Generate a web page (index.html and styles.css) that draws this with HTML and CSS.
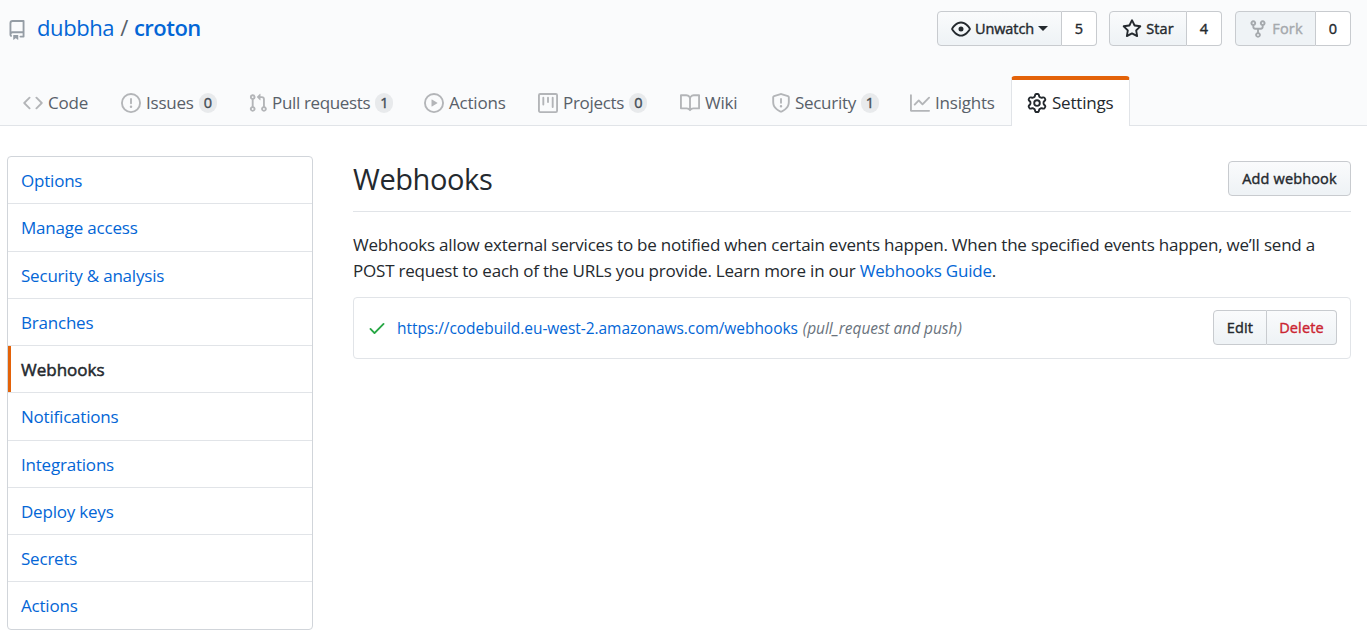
FILE: index.html
```html
<!DOCTYPE html>
<html lang="en">
<head>
<meta charset="utf-8">
<title>Webhooks</title>
<link rel="stylesheet" href="styles.css">
</head>
<body>
<header class="pagehead">
  <div class="repo-row">
    <h1 class="repo-title">
      <svg class="icon repo-icon" viewBox="0 0 16 16"><path fill-rule="evenodd" d="M2 2.5A2.5 2.5 0 014.5 0h8.75a.75.75 0 01.75.75v12.5a.75.75 0 01-.75.75h-2.5a.75.75 0 110-1.5h1.75v-2h-8a1 1 0 00-.714 1.7.75.75 0 01-1.072 1.05A2.495 2.495 0 012 11.5v-9zm10.5-1V9h-8c-.356 0-.694.074-1 .208V2.5a1 1 0 011-1h8zM5 12.25v3.25a.25.25 0 00.4.2l1.45-1.087a.25.25 0 01.3 0L8.6 15.7a.25.25 0 00.4-.2v-3.25a.25.25 0 00-.25-.25h-3.5a.25.25 0 00-.25.25z"/></svg>
      <a class="owner" href="#">dubbha</a><span class="slash">/</span><a class="repo" href="#">croton</a>
    </h1>
    <div class="actions">
      <div class="group watch">
        <button class="btn"><svg class="icon" viewBox="0 0 16 16"><path fill-rule="evenodd" d="M1.679 7.932c.412-.621 1.242-1.75 2.366-2.717C5.175 4.242 6.527 3.5 8 3.5c1.473 0 2.824.742 3.955 1.715 1.124.967 1.954 2.096 2.366 2.717a.119.119 0 010 .136c-.412.621-1.242 1.75-2.366 2.717C10.825 11.758 9.473 12.5 8 12.5c-1.473 0-2.824-.742-3.955-1.715C2.92 9.818 2.09 8.69 1.679 8.068a.119.119 0 010-.136zM8 2c-1.981 0-3.67.992-4.933 2.078C1.797 5.169.88 6.423.43 7.1a1.619 1.619 0 000 1.798c.45.678 1.367 1.932 2.637 3.024C4.329 13.008 6.019 14 8 14c1.981 0 3.67-.992 4.933-2.078 1.27-1.091 2.187-2.345 2.637-3.023a1.619 1.619 0 000-1.798c-.45-.678-1.367-1.932-2.637-3.023C11.671 2.992 9.981 2 8 2zm0 8a2 2 0 100-4 2 2 0 000 4z"/></svg><span>Unwatch</span><i class="caret"></i></button><a class="count" href="#">5</a>
      </div>
      <div class="group star">
        <button class="btn"><svg class="icon" viewBox="0 0 16 16"><path fill-rule="evenodd" d="M8 .25a.75.75 0 01.673.418l1.882 3.815 4.21.612a.75.75 0 01.416 1.279l-3.046 2.97.719 4.192a.75.75 0 01-1.088.791L8 12.347l-3.766 1.98a.75.75 0 01-1.088-.79l.72-4.194L.818 6.374a.75.75 0 01.416-1.28l4.21-.611L7.327.668A.75.75 0 018 .25zm0 2.445L6.615 5.5a.75.75 0 01-.564.41l-3.097.45 2.24 2.184a.75.75 0 01.216.664l-.528 3.084 2.769-1.456a.75.75 0 01.698 0l2.77 1.456-.53-3.084a.75.75 0 01.216-.664l2.24-2.183-3.096-.45a.75.75 0 01-.564-.41L8 2.694z"/></svg><span>Star</span></button><a class="count" href="#">4</a>
      </div>
      <div class="group fork">
        <button class="btn disabled"><svg class="icon" viewBox="0 0 16 16"><path fill-rule="evenodd" d="M5 3.25a.75.75 0 11-1.5 0 .75.75 0 011.5 0zm0 2.122a2.25 2.25 0 10-1.5 0v.878A2.25 2.25 0 005.75 8.5h1.5v2.128a2.251 2.251 0 101.5 0V8.5h1.5a2.25 2.25 0 002.25-2.25v-.878a2.25 2.25 0 10-1.5 0v.878a.75.75 0 01-.75.75h-4.5A.75.75 0 015 6.25v-.878zm3.75 7.378a.75.75 0 11-1.5 0 .75.75 0 011.5 0zm3-8.75a.75.75 0 100-1.5.75.75 0 000 1.5z"/></svg><span>Fork</span></button><a class="count" href="#">0</a>
      </div>
    </div>
  </div>
  <nav class="tabs">
    <a class="tab code" href="#"><svg class="icon" viewBox="0 0 16 16"><path fill-rule="evenodd" d="M4.72 3.22a.75.75 0 011.06 1.06L2.06 8l3.72 3.72a.75.75 0 11-1.06 1.06L.47 8.53a.75.75 0 010-1.06l4.25-4.25zm6.56 0a.75.75 0 10-1.06 1.06L13.94 8l-3.72 3.72a.75.75 0 101.06 1.06l4.25-4.25a.75.75 0 000-1.06l-4.25-4.25z"/></svg><span>Code</span></a>
    <a class="tab issues" href="#"><svg class="icon" viewBox="0 0 16 16"><path fill-rule="evenodd" d="M8 1.5a6.5 6.5 0 100 13 6.5 6.5 0 000-13zM0 8a8 8 0 1116 0A8 8 0 010 8zm9 3a1 1 0 11-2 0 1 1 0 012 0zm-.25-6.25a.75.75 0 00-1.5 0v3.5a.75.75 0 001.5 0v-3.5z"/></svg><span>Issues</span><b class="counter">0</b></a>
    <a class="tab pulls" href="#"><svg class="icon" viewBox="0 0 16 16"><path fill-rule="evenodd" d="M7.177 3.073L9.573.677A.25.25 0 0110 .854v4.792a.25.25 0 01-.427.177L7.177 3.427a.25.25 0 010-.354zM3.75 2.5a.75.75 0 100 1.5.75.75 0 000-1.5zm-2.25.75a2.25 2.25 0 113 2.122v5.256a2.251 2.251 0 11-1.5 0V5.372A2.25 2.25 0 011.5 3.25zM11 2.5h-1V4h1a1 1 0 011 1v5.628a2.251 2.251 0 101.5 0V5A2.5 2.5 0 0011 2.5zm1 10.25a.75.75 0 111.5 0 .75.75 0 01-1.5 0zM3.75 12a.75.75 0 100 1.5.75.75 0 000-1.5z"/></svg><span>Pull requests</span><b class="counter">1</b></a>
    <a class="tab runs" href="#"><svg class="icon" viewBox="0 0 16 16"><path fill-rule="evenodd" d="M1.5 8a6.5 6.5 0 1113 0 6.5 6.5 0 01-13 0zM8 0a8 8 0 100 16A8 8 0 008 0zM6.379 5.227A.25.25 0 006 5.442v5.117a.25.25 0 00.379.214l4.264-2.559a.25.25 0 000-.428L6.379 5.227z"/></svg><span>Actions</span></a>
    <a class="tab projects" href="#"><svg class="icon" viewBox="0 0 16 16"><path fill-rule="evenodd" d="M1.75 0A1.75 1.75 0 000 1.75v12.5C0 15.216.784 16 1.75 16h12.5A1.75 1.75 0 0016 14.25V1.75A1.75 1.75 0 0014.25 0H1.75zM1.5 1.75a.25.25 0 01.25-.25h12.5a.25.25 0 01.25.25v12.5a.25.25 0 01-.25.25H1.75a.25.25 0 01-.25-.25V1.75zM11.75 3a.75.75 0 00-.75.75v7.5a.75.75 0 001.5 0v-7.5a.75.75 0 00-.75-.75zm-8.25.75a.75.75 0 011.5 0v5.5a.75.75 0 01-1.5 0v-5.5zM8 3a.75.75 0 00-.75.75v3.5a.75.75 0 001.5 0v-3.5A.75.75 0 008 3z"/></svg><span>Projects</span><b class="counter">0</b></a>
    <a class="tab wiki" href="#"><svg class="icon" viewBox="0 0 16 16"><path fill-rule="evenodd" d="M0 1.75A.75.75 0 01.75 1h4.253c1.227 0 2.317.59 3 1.501A3.744 3.744 0 0111.006 1h4.245a.75.75 0 01.75.75v10.5a.75.75 0 01-.75.75h-4.507a2.25 2.25 0 00-1.591.659l-.622.621a.75.75 0 01-1.06 0l-.622-.621A2.25 2.25 0 005.258 13H.75a.75.75 0 01-.75-.75V1.75zm8.755 3a2.25 2.25 0 012.25-2.25H14.5v9h-3.757c-.71 0-1.4.201-1.992.572l.004-7.322zm-1.504 7.324l.004-5.073-.002-2.253A2.25 2.25 0 005.003 2.5H1.5v9h3.757a3.75 3.75 0 011.994.574z"/></svg><span>Wiki</span></a>
    <a class="tab security" href="#"><svg class="icon" viewBox="0 0 16 16"><path fill-rule="evenodd" d="M7.467.133a1.75 1.75 0 011.066 0l5.25 1.68A1.75 1.75 0 0115 3.48V7c0 1.566-.32 3.182-1.303 4.682-.983 1.498-2.585 2.813-5.032 3.855a1.7 1.7 0 01-1.33 0c-2.447-1.042-4.049-2.357-5.032-3.855C1.32 10.182 1 8.566 1 7V3.48a1.75 1.75 0 011.217-1.667l5.25-1.68zm.61 1.429a.25.25 0 00-.153 0l-5.25 1.68a.25.25 0 00-.174.238V7c0 1.358.275 2.666 1.057 3.86.784 1.194 2.121 2.34 4.366 3.297a.2.2 0 00.154 0c2.245-.956 3.582-2.104 4.366-3.298C13.225 9.666 13.5 8.36 13.5 7V3.48a.25.25 0 00-.174-.237l-5.25-1.68zM9 10.5a1 1 0 11-2 0 1 1 0 012 0zm-.25-5.75a.75.75 0 10-1.5 0v3a.75.75 0 001.5 0v-3z"/></svg><span>Security</span><b class="counter">1</b></a>
    <a class="tab insights" href="#"><svg class="icon" viewBox="0 0 16 16"><path fill-rule="evenodd" d="M1.5 1.75a.75.75 0 00-1.5 0v12.5c0 .414.336.75.75.75h14.5a.75.75 0 000-1.5H1.5V1.75zm14.28 2.53a.75.75 0 00-1.06-1.06L10 7.94 7.53 5.47a.75.75 0 00-1.06 0L3.22 8.72a.75.75 0 001.06 1.06L7 7.06l2.47 2.47a.75.75 0 001.06 0l5.25-5.25z"/></svg><span>Insights</span></a>
    <a class="tab settings selected" href="#"><svg class="icon" viewBox="0 0 16 16"><path fill-rule="evenodd" d="M7.429 1.525a6.593 6.593 0 011.142 0c.036.003.108.036.137.146l.289 1.105c.147.56.55.967.997 1.189.174.086.341.183.501.29.417.278.97.423 1.53.27l1.102-.303c.11-.03.175.016.195.046.219.31.41.641.573.989.014.031.022.11-.059.19l-.815.806c-.411.406-.562.957-.53 1.456a4.588 4.588 0 010 .582c-.032.499.119 1.05.53 1.456l.815.806c.08.08.073.159.059.19a6.494 6.494 0 01-.573.99c-.02.029-.086.074-.195.045l-1.103-.303c-.559-.153-1.112-.008-1.529.27-.16.107-.327.204-.5.29-.449.222-.851.628-.998 1.189l-.289 1.105c-.029.11-.101.143-.137.146a6.613 6.613 0 01-1.142 0c-.036-.003-.108-.037-.137-.146l-.289-1.105c-.147-.56-.55-.967-.997-1.189a4.502 4.502 0 01-.501-.29c-.417-.278-.97-.423-1.53-.27l-1.102.303c-.11.03-.175-.016-.195-.046a6.492 6.492 0 01-.573-.989c-.014-.031-.022-.11.059-.19l.815-.806c.411-.406.562-.957.53-1.456a4.587 4.587 0 010-.582c.032-.499-.119-1.05-.53-1.456l-.815-.806c-.08-.08-.073-.159-.059-.19a6.44 6.44 0 01.573-.99c.02-.029.086-.075.195-.045l1.103.303c.559.153 1.112.008 1.529-.27.16-.107.327-.204.5-.29.449-.222.851-.628.998-1.189l.289-1.105c.029-.11.101-.143.137-.146zM8 0c-.236 0-.47.01-.701.03-.743.065-1.29.615-1.458 1.261l-.29 1.106c-.017.066-.078.158-.211.224a5.994 5.994 0 00-.668.386c-.123.082-.233.09-.3.071L3.27 2.776c-.644-.177-1.392.02-1.82.63a7.977 7.977 0 00-.704 1.217c-.315.675-.111 1.422.363 1.891l.815.806c.05.048.098.147.088.294a6.084 6.084 0 000 .772c.01.147-.038.246-.088.294l-.815.806c-.474.469-.678 1.216-.363 1.891.2.428.436.835.704 1.218.428.609 1.176.806 1.82.63l1.103-.303c.066-.019.176-.011.299.071.213.143.436.272.668.386.133.066.194.158.212.224l.289 1.106c.169.646.715 1.196 1.458 1.26a8.094 8.094 0 001.402 0c.743-.064 1.29-.614 1.458-1.26l.29-1.106c.017-.066.078-.158.211-.224a5.98 5.98 0 00.668-.386c.123-.082.233-.09.3-.071l1.102.302c.644.177 1.392-.02 1.82-.63.268-.382.505-.789.704-1.217.315-.675.111-1.422-.364-1.891l-.814-.806c-.05-.048-.098-.147-.088-.294a6.1 6.1 0 000-.772c-.01-.147.039-.246.088-.294l.814-.806c.475-.469.679-1.216.364-1.891a7.992 7.992 0 00-.704-1.218c-.428-.609-1.176-.806-1.82-.63l-1.103.303c-.066.019-.176.011-.299-.071a5.991 5.991 0 00-.668-.386c-.133-.066-.194-.158-.212-.224L10.16 1.29C9.99.645 9.444.095 8.701.031A8.094 8.094 0 008 0zm1.5 8a1.5 1.5 0 11-3 0 1.5 1.5 0 013 0zM11 8a3 3 0 11-6 0 3 3 0 016 0z"/></svg><span>Settings</span></a>
  </nav>
</header>
<div class="layout">
  <nav class="menu">
    <a href="#">Options</a>
    <a href="#">Manage access</a>
    <a href="#">Security &amp; analysis</a>
    <a href="#">Branches</a>
    <a class="current" href="#">Webhooks</a>
    <a href="#">Notifications</a>
    <a href="#">Integrations</a>
    <a href="#">Deploy keys</a>
    <a href="#">Secrets</a>
    <a href="#">Actions</a>
  </nav>
  <main class="content">
    <div class="subhead">
      <h2>Webhooks</h2>
      <button class="btn add">Add webhook</button>
    </div>
    <p class="intro"><span class="line1">Webhooks allow external services to be notified when certain events happen. When the specified events happen, we’ll send a</span><br><span class="line2">POST request to each of the URLs you provide. Learn more in our <a href="#">Webhooks Guide</a>.</span></p>
    <div class="hook">
      <svg class="icon check" viewBox="0 0 16 16"><path fill-rule="evenodd" d="M13.78 4.22a.75.75 0 010 1.06l-7.25 7.25a.75.75 0 01-1.06 0L2.22 9.28a.75.75 0 011.06-1.06L6 10.94l6.72-6.72a.75.75 0 011.06 0z"/></svg>
      <a class="url" href="#">https://codebuild.eu-west-2.amazonaws.com/webhooks</a>
      <em class="events">(pull_request and push)</em>
      <div class="group hook-actions"><button class="btn edit">Edit</button><button class="btn delete">Delete</button></div>
    </div>
  </main>
</div>
</body>
</html>
```
FILE: styles.css
```css
* { box-sizing: border-box; }
body {
  margin: 0;
  height: 633px;
  overflow: hidden;
  background: #fff;
  color: #24292e;
  font: 400 17px/26px "Open Sans", "Noto Sans", sans-serif;
  letter-spacing: -0.21px;
}
a { color: #0366d6; text-decoration: none; }
.icon { width: 20px; height: 20px; flex: none; fill: currentColor; display: block; }

.pagehead {
  height: 126px;
  background: #fafbfc;
  border-bottom: 1px solid #e1e4e8;
  display: flex;
  flex-direction: column;
  justify-content: space-between;
}
.repo-row { display: flex; justify-content: space-between; padding: 11px 16px 0 7px; }
.repo-title { margin: 0; display: flex; align-items: center; height: 32px; font-size: 22px; font-weight: 400; letter-spacing: -0.4px; }
.repo-icon { color: #959da5; margin: 6px 10px 0 0; }
.slash { color: #586069; margin: 0 6px; }
.repo { font-weight: 600; letter-spacing: -0.5px; }

.actions { display: flex; }
.group { display: flex; height: 35px; }
.btn, .count {
  height: 35px;
  display: flex;
  align-items: center;
  justify-content: center;
  border: 1px solid #c8cbcf;
  border-radius: 4px;
  font: 400 14.5px/20px "Open Sans", "Noto Sans", sans-serif;
  -webkit-text-stroke: 0.4px currentColor;
  letter-spacing: 0.15px;
  color: #24292e;
  padding: 0;
}
.btn { background: linear-gradient(#fafbfc, #eff3f6 90%); }
.group .btn:first-child { border-radius: 4px 0 0 4px; }
.count { background: #fff; border-left: 0; border-radius: 0 4px 4px 0; width: 35px; }
.group .icon { margin-right: 4px; }
.watch .btn { width: 125px; letter-spacing: -0.1px; }
.star .btn { width: 78px; }
.fork .btn { width: 81px; }
.btn.disabled { color: #a5a9ad; background: #eff3f6; }
.star { margin-left: 12px; }
.fork { margin-left: 13px; }
.caret { border: 5px solid transparent; border-top-color: currentColor; border-bottom: 0; margin-left: 4px; }

.tabs { display: flex; height: 50px; padding-left: 7px; margin-bottom: -1px; }
.tab { display: flex; align-items: center; padding: 4px 0 0 16px; color: #586069; font-size: 17px; white-space: nowrap; }
.tab .icon { color: #b3b5b8; margin-right: 5px; }
.counter {
  width: 18px;
  height: 20px;
  border-radius: 10px;
  margin-left: 5px;
  background: #e8eaec;
  color: #444d56;
  font: 400 14.5px/20px "Open Sans", sans-serif;
  -webkit-text-stroke: 0.4px currentColor;
  text-align: center;
}
.code { width: 98px; }
.issues { width: 127px; }
.pulls { width: 176px; letter-spacing: -0.35px; }
.pulls .icon { margin-right: 4px; }
.runs { width: 114px; }
.projects { width: 142px; letter-spacing: -0.3px; }
.wiki { width: 91px; }
.security { width: 139px; letter-spacing: -0.3px; }
.insights { width: 117px; }
.security .icon { margin-right: 4px; }
.settings { width: 119px; padding: 0 0 0 15px; }
.selected { background: #fff; color: #24292e; border: 1px solid #e1e4e8; border-top: 4px solid #e36209; border-bottom: 0; border-radius: 4px 4px 0 0; }
.selected .icon { color: #24292e; }

.layout { display: flex; padding: 30px 16px 0 7px; }
.menu {
  width: 306px;
  height: 474px;
  margin-right: 40px;
  border: 1px solid #d1d5da;
  border-radius: 4px;
  display: grid;
  grid-template-rows: repeat(9, 47.27px) 1fr;
}
.menu a { display: flex; align-items: center; padding: 2px 0 0 13px; border-bottom: 1px solid #e1e4e8; }
.menu a:last-child { border-bottom: 0; padding-top: 0; }
.menu .current { color: #24292e; letter-spacing: 0; -webkit-text-stroke: 0.5px currentColor; box-shadow: inset 3px 0 #e36209; }

.content { flex: 1; }
.subhead { display: flex; justify-content: space-between; height: 56px; border-bottom: 1px solid #e1e4e8; }
.subhead h2 { margin: 3px 0 0; font-size: 29px; font-weight: 400; line-height: 40px; letter-spacing: -0.4px; }
.add { width: 123px; margin-top: 5px; }
.intro { margin: 20px 0 13px; white-space: nowrap; }
.hook { height: 62px; border: 1px solid #e1e4e8; border-radius: 4px; display: flex; align-items: center; padding: 0 13px 1px; font-size: 15.5px; letter-spacing: -0.05px; }
.check { color: #28a745; margin-right: 10px; }
.events { color: #6a737d; margin-left: 5px; }
.hook-actions { margin-left: auto; }
.edit { width: 54px; }
.delete { width: 70px; border-left: 0; border-radius: 0 4px 4px 0; color: #cb2431; }
```
